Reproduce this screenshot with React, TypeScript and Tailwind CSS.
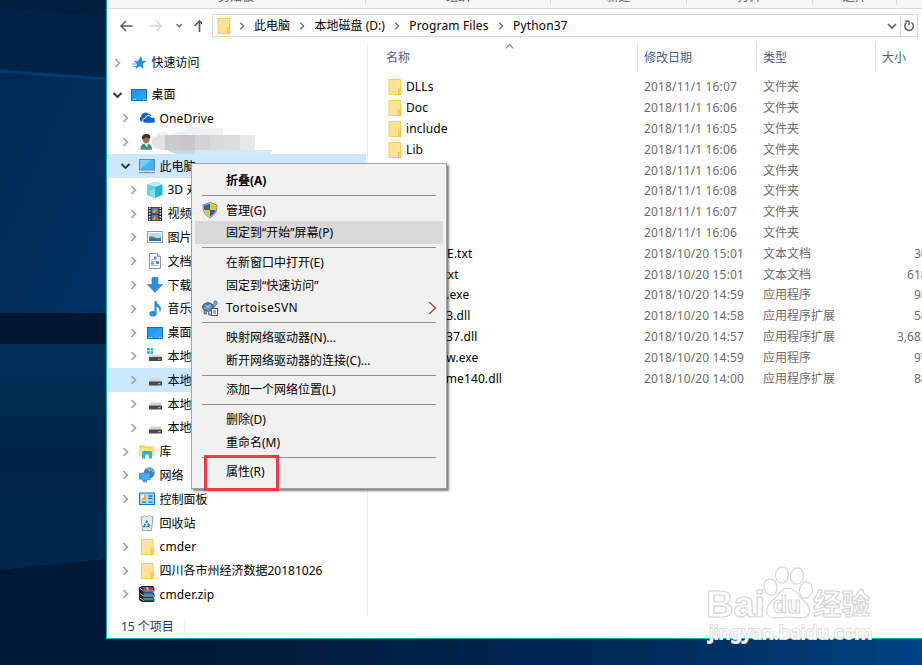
import React from 'react';
import { clsx } from 'clsx';

type IconName =
  | 'star' | 'desktop' | 'onedrive' | 'user' | 'pc' | 'cube' | 'video' | 'picture' | 'document'
  | 'download' | 'music' | 'systemDrive' | 'drive' | 'library' | 'network' | 'control' | 'recycle'
  | 'folder' | 'archive';

interface TreeNode {
  label: string;
  icon: IconName;
  level: 1 | 2 | 3;
  state?: 'open' | 'closed' | 'none';
  selected?: boolean;
  masked?: boolean;
}

interface FileEntry {
  name: string;
  date: string;
  type: string;
  size?: string;
}

interface MenuEntry {
  label: string;
  icon?: 'shield' | 'tortoise';
  bold?: boolean;
  hover?: boolean;
  submenu?: boolean;
}

const TREE: TreeNode[] = [
  { label: '桌面', icon: 'desktop', level: 1, state: 'open' },
  { label: 'OneDrive', icon: 'onedrive', level: 2 },
  { label: '', icon: 'user', level: 2, masked: true },
  { label: '此电脑', icon: 'pc', level: 2, state: 'open', selected: true },
  { label: '3D 对象', icon: 'cube', level: 3 },
  { label: '视频', icon: 'video', level: 3 },
  { label: '图片', icon: 'picture', level: 3 },
  { label: '文档', icon: 'document', level: 3 },
  { label: '下载', icon: 'download', level: 3 },
  { label: '音乐', icon: 'music', level: 3 },
  { label: '桌面', icon: 'desktop', level: 3 },
  { label: '本地磁盘', icon: 'systemDrive', level: 3 },
  { label: '本地磁盘', icon: 'drive', level: 3, selected: true },
  { label: '本地磁盘', icon: 'drive', level: 3 },
  { label: '本地磁盘', icon: 'drive', level: 3 },
  { label: '库', icon: 'library', level: 2 },
  { label: '网络', icon: 'network', level: 2 },
  { label: '控制面板', icon: 'control', level: 2 },
  { label: '回收站', icon: 'recycle', level: 2, state: 'none' },
  { label: 'cmder', icon: 'folder', level: 2 },
  { label: '四川各市州经济数据20181026', icon: 'folder', level: 2 },
  { label: 'cmder.zip', icon: 'archive', level: 2 },
];

const FILES: FileEntry[] = [
  { name: 'DLLs', date: '2018/11/1 16:07', type: '文件夹' },
  { name: 'Doc', date: '2018/11/1 16:06', type: '文件夹' },
  { name: 'include', date: '2018/11/1 16:05', type: '文件夹' },
  { name: 'Lib', date: '2018/11/1 16:06', type: '文件夹' },
  { name: 'libs', date: '2018/11/1 16:06', type: '文件夹' },
  { name: 'Scripts', date: '2018/11/1 16:08', type: '文件夹' },
  { name: 'tcl', date: '2018/11/1 16:07', type: '文件夹' },
  { name: 'Tools', date: '2018/11/1 16:06', type: '文件夹' },
  { name: 'LICENSE.txt', date: '2018/10/20 15:01', type: '文本文档', size: '30 KB' },
  { name: 'NEWS.txt', date: '2018/10/20 15:01', type: '文本文档', size: '618 KB' },
  { name: 'python.exe', date: '2018/10/20 14:59', type: '应用程序', size: '98 KB' },
  { name: 'python3.dll', date: '2018/10/20 14:58', type: '应用程序扩展', size: '58 KB' },
  { name: 'python37.dll', date: '2018/10/20 14:57', type: '应用程序扩展', size: '3,683 KB' },
  { name: 'pythonw.exe', date: '2018/10/20 14:59', type: '应用程序', size: '97 KB' },
  { name: 'vcruntime140.dll', date: '2018/10/20 14:00', type: '应用程序扩展', size: '88 KB' },
];

const MENU: MenuEntry[][] = [
  [{ label: '折叠(A)', bold: true }],
  [{ label: '管理(G)', icon: 'shield' }, { label: '固定到“开始”屏幕(P)', hover: true }],
  [
    { label: '在新窗口中打开(E)' },
    { label: '固定到“快速访问”' },
    { label: 'TortoiseSVN', icon: 'tortoise', submenu: true },
  ],
  [{ label: '映射网络驱动器(N)...' }, { label: '断开网络驱动器的连接(C)...' }],
  [{ label: '添加一个网络位置(L)' }],
  [{ label: '删除(D)' }, { label: '重命名(M)' }],
  [{ label: '属性(R)' }],
];

// Latin-only labels are set slightly wider than the CJK ones
const isLatin = (text: string) => /^[\x20-\x7e]+$/.test(text);

const ICONS: Record<IconName, React.ReactNode> = {
  star: (
    <>
      <path d="M10.200 1l1 4.700 4.300.3-3.800 3 .9 5-3.900-2.700L4.500 14l1.300-5L2.500 6l4.600-.3z" fill="#1b8fe6" />
      <path d="M.8 9h4M1.500 11.500h3.500M3.500 6.500h3" stroke="#4eb0f3" strokeWidth="1" />
    </>
  ),
  desktop: (
    <>
      <rect x="0.5" y="2.5" width="15" height="11" fill="#1c9bfc" stroke="#0c6fc0" />
      <path d="M1 13L14 3h1v10z" fill="#2ba3ff" />
      <path d="M2 12.500h1M4 12.500h1M12 12.500h1M14 12.500h1" stroke="#d8f0ff" />
    </>
  ),
  onedrive: (
    <>
      <path d="M2.500 11.600A2.700 2.700 0 012 6.800 4.600 4.600 0 019.500 3.700 3.800 3.800 0 0112.500 6L6 12z" fill="#0b63c5" />
      <path d="M6.200 13.200a2.500 2.500 0 010-5 3.300 3.300 0 016.200-.8 3 3 0 012 5.800z" fill="#0b63c5" stroke="#fff" strokeWidth="0.900" />
    </>
  ),
  user: (
    <>
      <path d="M1.500 15.800c0-4.500 1.500-6.300 5.500-6.300s6 1.800 6 6.300z" fill="#3f9272" />
      <path d="M5 9l3 4.500L9.500 9z" fill="#f0e4d4" />
      <ellipse cx="7.200" cy="5" rx="3.400" ry="4.400" fill="#a9714e" />
      <path d="M3 5.500C2.500 1.500 4.500 0 7.500 0s4.500 1.500 3.600 4.800C9 4.500 8 3.500 7 3c-1 1-2 2-4 2.500z" fill="#3a332e" />
    </>
  ),
  pc: (
    <>
      <rect x="0.500" y="1.500" width="15" height="10.500" fill="#45b4f5" stroke="#6f8796" />
      <path d="M1 11.500V2h11z" fill="#79cefa" />
      <path d="M6 12.500h4v1.500H6z" fill="#b9c6ce" />
      <path d="M0 14.700h16" stroke="#74838c" />
    </>
  ),
  cube: (
    <>
      <path d="M8 0l7.500 2.500v10.500L8 16 .5 13V2.500z" fill="#26b5cc" />
      <path d="M8 5l7.500-2.500L8 0 .5 2.500z" fill="#b8edf4" />
      <path d="M.5 2.500L8 5v11L.5 13z" fill="#5cd2e2" />
      <path d="M3 13.900V8.500L8 7v9z" fill="#86dfea" />
    </>
  ),
  video: (
    <>
      <rect x="1" y="1" width="14" height="14" fill="#252525" />
      <rect x="4.500" y="1.500" width="7" height="6" fill="#4b83c4" />
      <rect x="4.500" y="8.500" width="7" height="6" fill="#3d79b6" />
      <path d="M5 7l3-4 3.500 4zM5 14l3-4 3.500 4z" fill="#d7a52f" />
      <path d="M8 5.500h3.500v2H8zM8 12.500h3.500v2H8z" fill="#c64c35" />
      <path d="M2.700 1.500v13M13.300 1.500v13" stroke="#f5f5f5" strokeWidth="1.500" strokeDasharray="1.500 1.300" />
    </>
  ),
  picture: (
    <>
      <rect x="0.500" y="2.500" width="15" height="11" fill="#fff" stroke="#9b9b9b" />
      <rect x="2" y="4" width="12" height="8" fill="#b5dff6" />
      <path d="M2 8c3-2 5 .5 7 1s4-.5 5-.5V12H2z" fill="#467f91" />
      <path d="M2 10.500h12V12H2z" fill="#2e72b0" />
    </>
  ),
  document: (
    <>
      <path d="M2.500.5h8l3 3v12h-11z" fill="#fff" stroke="#969696" />
      <path d="M10.500.5v3h3" fill="#ddd" stroke="#969696" />
      <path d="M4 6.500h3M4 8.500h8M4 12.500h8" stroke="#8ac2e4" />
      <path d="M7 3.500h2.500v3H7zM9 8h3v3H9zM4 9.500h3v2H4z" fill="#3c97d3" />
    </>
  ),
  download: <path d="M5 .5h6v7h4.500L8 15.500.5 7.500H5z" fill="#318fe0" stroke="#2579c7" strokeWidth="0.600" />,
  music: (
    <>
      <ellipse cx="6" cy="12.800" rx="3.600" ry="2.800" fill="#1992e8" />
      <path d="M7.500 0h2c0 3.500 4.500 4 4.500 8 0 1.500-.8 2.500-1.500 3 .4-3-1-4.400-3-5.200v7h-2z" fill="#1992e8" />
    </>
  ),
  systemDrive: (
    <>
      <path d="M0 0h2.700v2.500H0zM3.500 0h2.700v2.500H3.500zM0 3.300h2.700v2.500H0zM3.500 3.300h2.700v2.500H3.500z" fill="#1ba9e8" />
      <path d="M4 6.500h9l2 2.500H2z" fill="#d4d4d4" />
      <rect x="2" y="9" width="13" height="4" fill="#484848" />
      <rect x="11" y="10.500" width="2.500" height="1.200" fill="#5ee070" />
    </>
  ),
  drive: (
    <>
      <path d="M4 6.500h9l2 3H2z" fill="#d4d4d4" />
      <rect x="2" y="9.500" width="13" height="4" fill="#484848" />
      <rect x="11" y="11" width="2.500" height="1.200" fill="#5ee070" />
    </>
  ),
  library: (
    <>
      <path d="M0 1h6l1 1.500h8.500V12H0z" fill="#fcd468" />
      <path d="M1 4h14.500v8H1z" fill="#ffe28c" />
      <path d="M3 14.500V8.500C3 7.500 4 7 5 7h6c1 0 2 .5 2 1.500v6h-3.200v-4H6.200v4z" fill="#36a9e8" />
    </>
  ),
  network: (
    <>
      <circle cx="10.300" cy="5.800" r="5.500" fill="#4485b4" />
      <path d="M8 1.500c2 0 3 1.500 2 3M12 1.500c0 3 2 2 3 4" stroke="#a5cde5" fill="none" strokeWidth="1.200" />
      <path d="M0 6.500l11-1v7.500L0 12z" fill="#40b1f2" stroke="#2e7cae" strokeWidth="0.700" />
      <path d="M4 12.800l4 .2v2.500l-5-1z" fill="#4990bb" />
    </>
  ),
  control: (
    <>
      <rect x="0.500" y="2" width="15" height="11.500" fill="#a9dcf7" stroke="#1878b9" />
      <circle cx="5" cy="6.500" r="2.700" fill="#fff" />
      <path d="M5 6.500V3.800A2.700 2.700 0 112.500 7.500z" fill="#f2a33a" />
      <path d="M9.500 5h4M9.500 7.500h4M3 11.200h4M9.500 11.200h4" stroke="#1878b9" strokeWidth="1.300" />
    </>
  ),
  recycle: (
    <>
      <path d="M2 2l12-.5-1.500 14h-9z" fill="#e9eced" stroke="#92999d" strokeWidth="0.900" />
      <path d="M3 2.500L5 .8l3 1 3-1.200 2.500 1.700" fill="#fff" stroke="#a4a9ac" strokeWidth="0.800" />
      <path d="M5 11.500l2.800-5 3 5z" fill="none" stroke="#2878c4" strokeWidth="1.700" strokeDasharray="3 1" />
    </>
  ),
  folder: (
    <>
      <rect x="2.500" y="0.500" width="11.500" height="15" fill="#ffe391" stroke="#f0cf63" />
      <path d="M12 15.500v-5.500h2.500v5.500z" fill="#fbd55f" stroke="#e3b83d" strokeWidth="0.700" />
    </>
  ),
  archive: (
    <>
      <path d="M0 1.500L3 0h11l1.500 2v3L14 6l1.500 2v3L14 11.500l1.500 1V15l-1 1H3l-3-2z" fill="#241b20" />
      <path d="M3 1h10.500l1.500 3.300H5z" fill="#c22c86" />
      <path d="M4 6.500h10l1 3H5z" fill="#2d78c7" />
      <path d="M4 11.800h10l1 2.700H5z" fill="#24a17a" />
      <path d="M1 2.500l3.500 2.500H15M1 7.500l3.500 2.500H15M1 12l3.500 2.500" stroke="#f4f4f4" strokeWidth="0.800" fill="none" />
      <path d="M7 1h2l.8 3.300h-2z" fill="#e9c13e" />
    </>
  ),
};

const Icon: React.FC<{ name: IconName }> = ({ name }) => (
  <svg className="w-4 h-4 shrink-0" viewBox="0 0 16 16" aria-hidden="true">
    {ICONS[name]}
  </svg>
);

const FolderIcon: React.FC = () => (
  <svg className="w-[14px] h-4 shrink-0" viewBox="2 0 13 16" aria-hidden="true">
    {ICONS.folder}
  </svg>
);

const Chevron: React.FC<{ className: string; d?: string; width?: number }> = ({ className, d = 'M3 1l4 4-4 4', width = 1.6 }) => (
  <svg className={clsx('shrink-0', className)} viewBox="0 0 10 10" fill="none" stroke="currentColor" strokeWidth={width} aria-hidden="true">
    <path d={d} />
  </svg>
);

const Wallpaper: React.FC = () => (
  <svg className="absolute inset-0 w-full h-full" viewBox="0 0 922 665" preserveAspectRatio="none" aria-hidden="true">
    <defs>
      <linearGradient id="upper" x1="0" y1="0" x2="1" y2="1">
        <stop offset="0" stopColor="#002850" />
        <stop offset="1" stopColor="#003263" />
      </linearGradient>
      <linearGradient id="lower" x1="0" y1="0" x2="0" y2="1">
        <stop offset="0" stopColor="#003059" />
        <stop offset="0.5" stopColor="#002447" />
        <stop offset="1" stopColor="#00284f" />
      </linearGradient>
      <linearGradient id="floor" x1="0" y1="0" x2="1" y2="0">
        <stop offset="0" stopColor="#001734" />
        <stop offset="0.3" stopColor="#001b3c" />
        <stop offset="0.7" stopColor="#002a58" />
        <stop offset="1" stopColor="#004384" />
      </linearGradient>
    </defs>
    <rect width="922" height="665" fill="url(#floor)" />
    <path d="M0 0h107v80L0 71z" fill="#002347" />
    <path d="M0 0h107v17L0 7z" fill="#001e3e" />
    <path d="M0 71l107 9v234H0z" fill="url(#upper)" />
    <path d="M0 71l107 8" stroke="#003f78" strokeOpacity="0.5" strokeWidth="4" />
    <path d="M0 71l107 8" stroke="#003f78" strokeWidth="1.500" />
    <rect y="313" width="107" height="31" fill="#001532" />
    <path d="M0 344h107v215L0 570z" fill="url(#lower)" />
    <path d="M0 570l107-11v106H0z" fill="#001836" />
  </svg>
);

// Mosaic covering the account name
const NameMask: React.FC = () => (
  <svg className="absolute left-[45px] -top-[2px] w-[122px] h-[32px]" viewBox="0 0 122 32" aria-hidden="true">
    <path d="M0 14C5 2 12 1 18 7l20-7h33v8H0z" fill="#eef1f3" />
    <path d="M16 22h104c-1 6-5 9-20 10H50z" fill="#d6e8f6" />
    <path d="M0 14C0 10 4 7 13 7v15C5 22 0 19 0 14z" fill="#e2e3df" />
    <rect x="13" y="7" width="15" height="15" fill="#c9cacb" />
    <rect x="28" y="7" width="15" height="15" fill="#cdc5cc" />
    <rect x="43" y="7" width="15" height="15" fill="#d2d2d4" />
    <rect x="58" y="7" width="15" height="15" fill="#dadada" />
    <rect x="73" y="7" width="15" height="15" fill="#dcdcda" />
    <rect x="88" y="7" width="15" height="15" fill="#e9e9e9" />
    <path d="M15 22h28v7C32 28 22 26 15 22z" fill="#c9d7e2" />
  </svg>
);

const TreeRow: React.FC<{ node: TreeNode }> = ({ node }) => {
  const { label, icon, level, state = 'closed', selected, masked } = node;
  return (
    <div
      className={clsx(
        'relative flex items-center h-[23.8px] mr-[1px] whitespace-nowrap',
        level === 1 && 'pl-[5px]',
        level === 2 && 'pl-[13px]',
        level === 3 && 'pl-[21px]',
        selected && 'bg-[#cce8ff]',
      )}
    >
      <span className="w-[19px] shrink-0 flex">
        {state === 'closed' && <Chevron className="w-[11px] h-[10px] text-[#a0a0a0]" />}
        {state === 'open' && <Chevron className="w-[11px] h-[10px] text-[#333333]" d="M1 3l4 4 4-4" width={1.8} />}
      </span>
      <Icon name={icon} />
      <span className={clsx('ml-[4.500px] pt-[1px]', isLatin(label) && 'tracking-[0.15px]')}>{label}</span>
      {masked && <NameMask />}
    </div>
  );
};

const Ribbon: React.FC = () => (
  <div className="flex h-[9px] shrink-0 overflow-hidden bg-[#f5f6f7] border-b border-[#d9dadc] text-[#555555] leading-[14px]">
    {[
      ['剪贴板', 'w-[259px]'],
      ['组织', 'w-[185px]'],
      ['新建', 'w-[136px]'],
      ['打开', 'w-[126px]'],
      ['选择', 'w-[84px]'],
    ].map(([label, width]) => (
      <div key={label} className={clsx('h-[5px] shrink-0 flex justify-center items-end border-r border-[#dcdddf]', width)}>
        <span className="-translate-y-[1px]">{label}</span>
      </div>
    ))}
  </div>
);

const AddressBar: React.FC = () => (
  <div className="flex items-center h-[33px] shrink-0 pl-3">
    <svg className="w-[83px] h-4 shrink-0" viewBox="0 0 83 16" fill="none" aria-hidden="true">
      <path d="M13.500 8H2M7 3L2 8l5 5" stroke="#5c5c5c" strokeWidth="1.500" />
      <path d="M31 8h11.500M37.500 3l5 5-5 5" stroke="#d3d3d3" strokeWidth="1.500" />
      <path d="M57.500 6l2.700 2.800L62.900 6" stroke="#767676" strokeWidth="1.500" />
      <path d="M80.500 14V3M75.500 8l5-5 5 5" stroke="#5c5c5c" strokeWidth="1.700" />
    </svg>
    <div className="ml-[10px] flex items-center w-[706px] h-[23px] border border-[#d9d9d9] whitespace-nowrap">
      <span className="ml-[4px] flex w-4"><FolderIcon /></span>
      {['此电脑', '本地磁盘 (D:)', 'Program Files', 'Python37'].map((part, i) => (
        <React.Fragment key={part}>
          <Chevron className={clsx('w-[8px] h-[8px] text-[#666666]', i === 0 ? 'ml-[5px] mr-[8px]' : 'ml-[8px] mr-[8.500px]')} />
          <span className={clsx(isLatin(part) && 'tracking-[0.15px]')}>{part}</span>
        </React.Fragment>
      ))}
      <Chevron className="ml-auto mr-[3px] w-[10px] h-[10px] text-[#5f5f5f]" d="M1 3l4 4 4-4" width={1.700} />
      <span className="flex items-center justify-center w-[17px] h-full border-l border-[#d9d9d9]">
        <svg className="w-[12px] h-[12px]" viewBox="0 0 12 12" fill="none" stroke="#5f5f5f" strokeWidth="1.500" aria-hidden="true">
          <path d="M8.300 2.400a4.300 4.300 0 11-4.800.3" />
          <path d="M2 1.200h4v4" />
        </svg>
      </span>
    </div>
  </div>
);

const FileList: React.FC = () => (
  <div className="flex-1 min-w-0 overflow-hidden">
    <div className="relative flex h-[29px] mt-[1px] text-[#4c607a] whitespace-nowrap">
      <div className="w-[270px] shrink-0 pl-[18px] border-r border-[#e5e5e5] flex items-center">名称</div>
      <div className="w-[119px] shrink-0 pl-[6px] border-r border-[#e5e5e5] flex items-center">修改日期</div>
      <div className="w-[119px] shrink-0 pl-[6px] border-r border-[#e5e5e5] flex items-center">类型</div>
      <div className="pl-[6px] flex items-center">大小</div>
      <Chevron className="absolute left-[137px] top-[-1px] w-[9px] h-[9px] text-[#808080]" d="M1 7l4-4 4 4" width={1.300} />
    </div>
    <div className="pt-[5px]">
      {FILES.map(file => (
        <div key={file.name} className="flex items-center h-[20.800px] whitespace-nowrap text-[#6d6d6d]">
          <div className="w-[276px] shrink-0 pl-5 flex items-center text-black tracking-[0.1px]">
            <span className="w-[18px] shrink-0 flex">{!file.size && <FolderIcon />}</span>
            {file.name}
          </div>
          <span className="w-[119px] shrink-0 tracking-[0.150px]">{file.date}</span>
          <span className="w-[119px] shrink-0">{file.type}</span>
          <span className="w-[64px] shrink-0 text-right">{file.size}</span>
        </div>
      ))}
    </div>
  </div>
);

const ShieldIcon: React.FC = () => (
  <svg className="w-4 h-4" viewBox="0 0 16 16" aria-hidden="true">
    <path d="M8 .5L15 3c0 6-1.500 10-7 12.500C2.500 13 1 9 1 3z" fill="#e8eaec" stroke="#5c6268" strokeWidth="0.800" />
    <path d="M8 1.600V8H2.200C1.900 6.500 1.900 5 2 3.600z" fill="#1668b8" />
    <path d="M8 1.600V8h5.800c.3-1.500.3-3 .2-4.400z" fill="#fbbd23" />
    <path d="M8 14.400V8H2.200C3 11 4.800 13 8 14.400z" fill="#fbbd23" />
    <path d="M8 14.400V8h5.800c-.8 3-2.600 5-5.800 6.400z" fill="#1668b8" />
  </svg>
);

const TortoiseIcon: React.FC = () => (
  <svg className="w-4 h-4" viewBox="0 0 16 16" aria-hidden="true">
    <path d="M9.500 5.500L12 3.500c-.5-2 .5-3 2-2.500s1.800 2.500.8 3.500L12 7.500z" fill="#8ea9c2" stroke="#3f5c7b" strokeWidth="0.700" />
    <ellipse cx="6" cy="7" rx="5.500" ry="4.300" fill="#557fa8" stroke="#2c4b6d" strokeWidth="0.800" />
    <path d="M3 5.500l3 1 3-1.500M6 6.500v4M2 8.500l4-2 4 2" stroke="#b7cfe2" strokeWidth="0.800" fill="none" />
    <path d="M2 10.500v3.500h2.500v-2.500M6.500 11.500V15H9" fill="#7595b2" stroke="#3f5c7b" strokeWidth="0.700" />
    <rect x="9.500" y="8.500" width="6" height="7" fill="#fff" stroke="#4e4e4e" />
    <path d="M11 11h3M11 13h3" stroke="#4e4e4e" />
  </svg>
);

const ContextMenu: React.FC = () => (
  <div className="absolute left-[191px] top-[163px] w-[256px] h-[326px] pt-[5px] px-[2px] bg-[#f1f1f1] border border-[#a3a3a3] shadow-[2px_2px_2px_rgba(0,0,0,0.5)] whitespace-nowrap">
    {MENU.map((group, i) => (
      <React.Fragment key={i}>
        {i > 0 && <div className="h-[1px] my-[3px] ml-[8px] mr-[8px] bg-[#919191]" />}
        {group.map(item => (
          <div
            key={item.label}
            className={clsx('flex items-center h-[22.700px] mx-[1px]', item.hover && 'bg-[#d8d8d8]', item.bold && 'font-bold')}
          >
            <span className="w-[31px] pl-[7px] shrink-0 flex">
              {item.icon === 'shield' && <ShieldIcon />}
              {item.icon === 'tortoise' && <TortoiseIcon />}
            </span>
            <span className={clsx('pt-[1px]', isLatin(item.label) && 'tracking-[0.350px]')}>{item.label}</span>
            {item.submenu && <Chevron className="ml-auto mr-[4px] w-[14px] h-[14px] text-[#8a3a3a]" d="M3 .8L7.500 5 3 9.200" width={0.900} />}
          </div>
        ))}
      </React.Fragment>
    ))}
  </div>
);

const Watermark: React.FC = () => (
  <div className="absolute left-[706px] top-[564px] w-[172px] h-[84px]">
    <svg className="w-full h-full" viewBox="0 0 172 84" fill="#ffffff" stroke="#d6d6d6" strokeWidth="1.200" aria-hidden="true">
      <g fontFamily="Liberation Sans, Noto Sans CJK SC, sans-serif" fontWeight="700">
        <text x="0" y="53" fontSize="37" textLength="59" lengthAdjust="spacingAndGlyphs">Bai</text>
        <ellipse cx="64.500" cy="23" rx="6.500" ry="8.200" transform="rotate(-10 64.500 23)" />
        <ellipse cx="76" cy="11" rx="6.500" ry="8.200" />
        <ellipse cx="91" cy="12" rx="6.500" ry="8.200" transform="rotate(8 91 12)" />
        <ellipse cx="100" cy="26" rx="6.500" ry="8.200" transform="rotate(10 100 26)" />
        <path d="M82 24c8 0 10 8 15 12 6 5 8 10 6 14-3 6-12 3-21 3s-16 3-20-2c-3-5 0-11 5-15s8-12 15-12z" />
        <text x="67" y="49" fontSize="24" textLength="28" lengthAdjust="spacingAndGlyphs">du</text>
        <text x="107" y="51" fontSize="29" textLength="57" lengthAdjust="spacingAndGlyphs">经验</text>
      </g>
      <text x="3" y="75" fontFamily="Noto Sans, sans-serif" fontSize="18" strokeWidth="2" paintOrder="stroke" stroke="#dedede" textLength="163" lengthAdjust="spacingAndGlyphs">
        jingyan.baidu.com
      </text>
    </svg>
  </div>
);

export default function App() {
  return (
    <main className="relative w-[922px] h-[665px] overflow-hidden bg-[#001836] font-['Noto_Sans','Noto_Sans_CJK_SC',sans-serif] text-[12px] leading-[18px] text-black">
      <Wallpaper />
      <section className="relative flex flex-col ml-[106px] h-[639px] bg-white border-l border-b border-[#00b1bf]">
        <Ribbon />
        <AddressBar />
        <div className="flex flex-1 min-h-0">
          <nav className="w-[261px] shrink-0 border-r border-[#f0f0f0] pt-[9px] mb-[22px]">
            <TreeRow node={{ label: '快速访问', icon: 'star', level: 1 }} />
            <div className="h-2" />
            {TREE.map((node, i) => (
              <TreeRow key={i} node={node} />
            ))}
          </nav>
          <FileList />
        </div>
        <footer className="absolute left-0 bottom-[2px] flex items-center h-[18px] pl-[14px] text-[#1e395b]">
          <span className="pr-[10px] border-r border-[#eeeeee]">15 个项目</span>
        </footer>
      </section>
      <ContextMenu />
      <div className="absolute left-[204px] top-[455px] w-[75px] h-[36px] border-[3px] border-[#f83a3a]" />
      <Watermark />
    </main>
  );
}
